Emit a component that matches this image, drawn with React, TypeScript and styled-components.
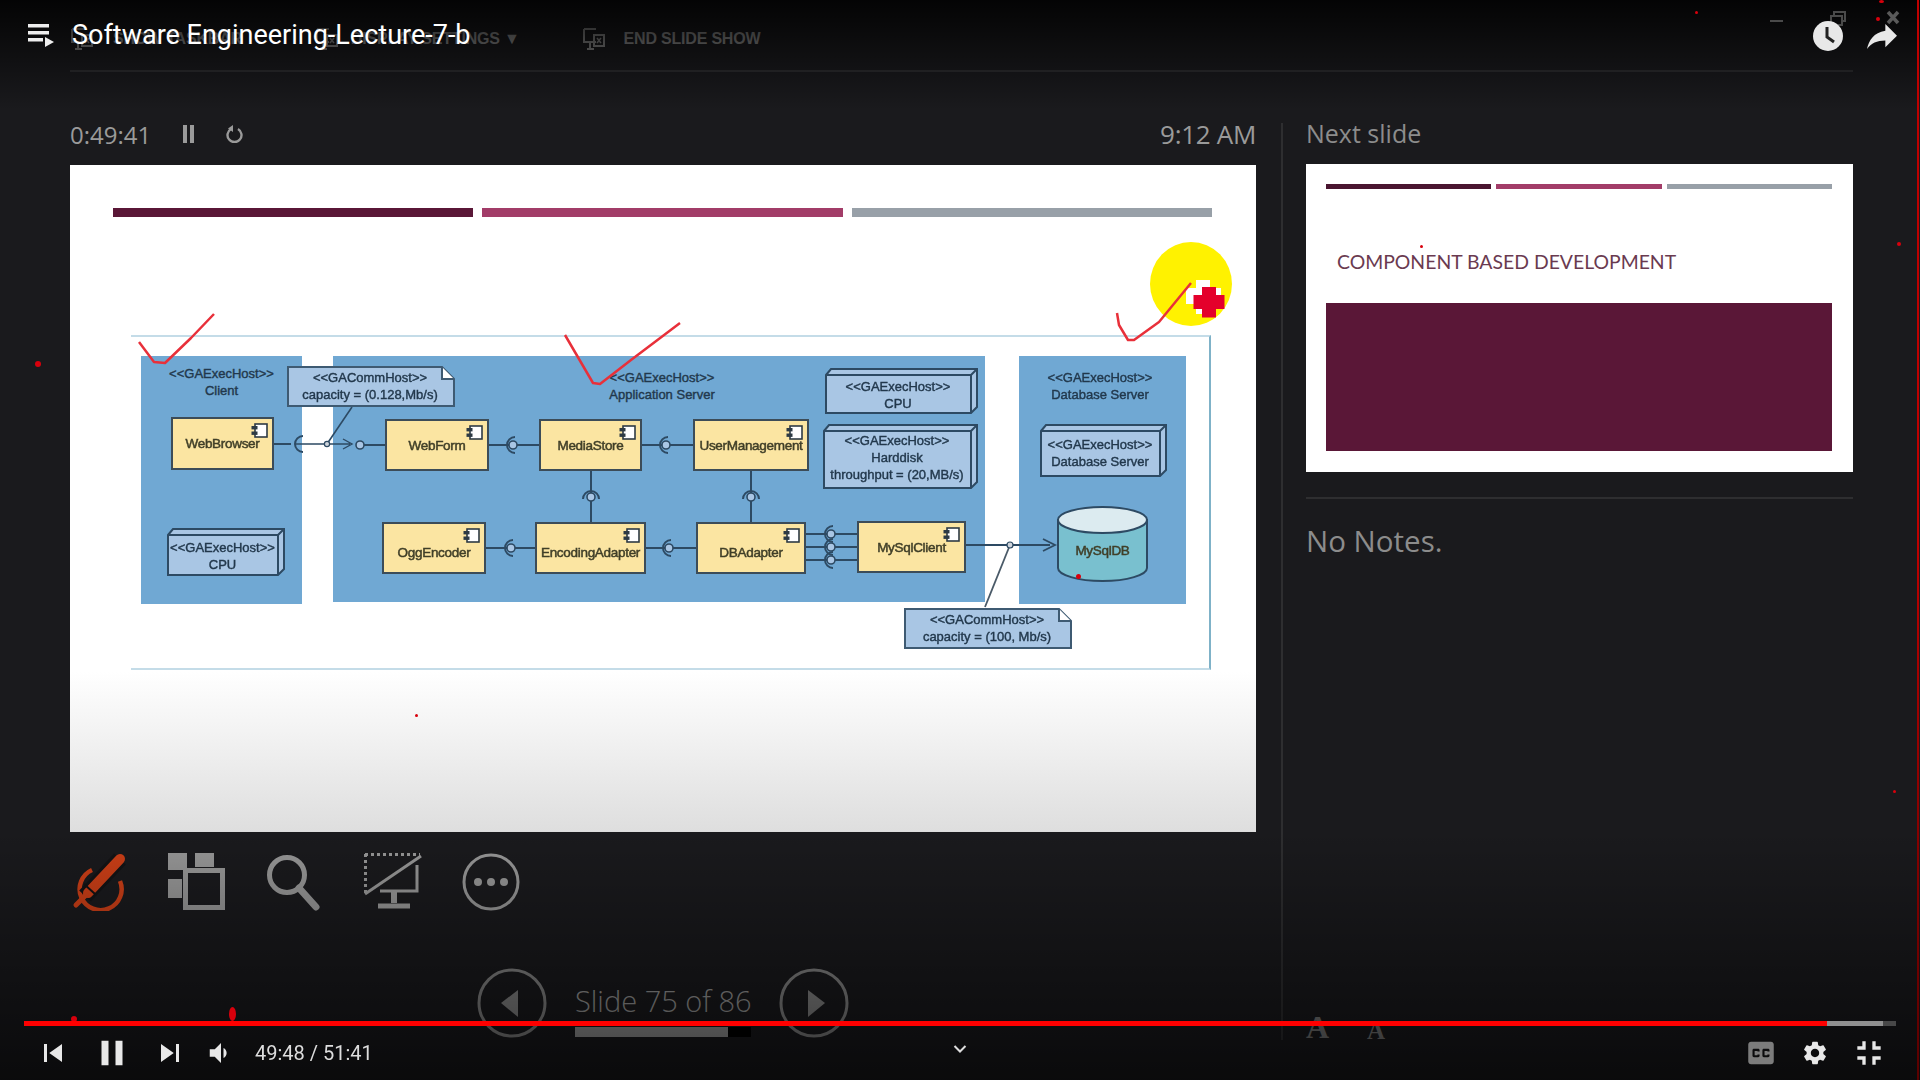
// REACT //
import React from 'react';

// COMPONENTS //
import styled, { createGlobalStyle } from 'styled-components';

// diagram nodes are given in page pixels, the frame starts here
const FRAME_X = 131;
const FRAME_Y = 335;

interface Place {
    $x: number;
    $y: number;
    $w: number;
    $h: number;
}

const CONTAINERS = [
    { x: 141, y: 356, w: 161, h: 248, lines: ['<<GAExecHost>>', 'Client'], top: 9, shift: 0 },
    { x: 333, y: 356, w: 652, h: 246, lines: ['<<GAExecHost>>', 'Application Server'], top: 13, shift: 6 },
    { x: 1019, y: 356, w: 167, h: 248, lines: ['<<GAExecHost>>', 'Database Server'], top: 13, shift: -5 },
];

const COMPONENTS = [
    { x: 171, y: 417, w: 103, h: 53, name: 'WebBrowser', drop: 0 },
    { x: 385, y: 419, w: 104, h: 52, name: 'WebForm', drop: 0 },
    { x: 539, y: 419, w: 103, h: 52, name: 'MediaStore', drop: 0 },
    { x: 693, y: 419, w: 116, h: 52, name: 'UserManagement', drop: 0 },
    { x: 382, y: 522, w: 104, h: 52, name: 'OggEncoder', drop: 9 },
    { x: 535, y: 522, w: 111, h: 52, name: 'EncodingAdapter', drop: 9 },
    { x: 696, y: 522, w: 110, h: 52, name: 'DBAdapter', drop: 9 },
    { x: 857, y: 521, w: 109, h: 52, name: 'MySqlClient', drop: 0 },
];

const HOSTS = [
    { x: 167, y: 528, w: 118, h: 48, pad: 11, lines: ['<<GAExecHost>>', 'CPU'] },
    { x: 825, y: 368, w: 153, h: 46, pad: 10, lines: ['<<GAExecHost>>', 'CPU'] },
    { x: 823, y: 424, w: 155, h: 65, pad: 8, lines: ['<<GAExecHost>>', 'Harddisk', 'throughput = (20,MB/s)'] },
    { x: 1040, y: 424, w: 127, h: 53, pad: 12, lines: ['<<GAExecHost>>', 'Database Server'] },
];

const NOTES = [
    { x: 287, y: 366, w: 168, h: 41, lines: ['<<GACommHost>>', 'capacity = (0.128,Mb/s)'] },
    { x: 904, y: 608, w: 168, h: 41, lines: ['<<GACommHost>>', 'capacity = (100, Mb/s)'] },
];

const SPECKS = [
    { x: 35, y: 361, w: 6, h: 6 },
    { x: 415, y: 714, w: 3, h: 3 },
    { x: 1076, y: 574, w: 5, h: 5 },
    { x: 1420, y: 245, w: 3, h: 3 },
    { x: 1695, y: 11, w: 3, h: 3 },
    { x: 1879, y: 0, w: 5, h: 3 },
    { x: 1876, y: 17, w: 4, h: 4 },
    { x: 1897, y: 242, w: 4, h: 4 },
    { x: 1893, y: 790, w: 3, h: 3 },
    { x: 71, y: 1016, w: 6, h: 6 },
    { x: 229, y: 1007, w: 7, h: 14 },
];

// sockets: ball on the wire and a half ring around it
const Socket: React.FC<{ x: number; y: number; turn?: number }> = ({ x, y, turn = 0 }) => (
    <g transform={`rotate(${turn} ${x} ${y})`}>
        <path d={`M${x + 2} ${y - 8}A8 8 0 0 0 ${x + 2} ${y + 8}`} fill="none" stroke="#2d4a63" strokeWidth="2" />
        <circle cx={x} cy={y} r="4" fill="#a9c6e4" stroke="#2d4a63" strokeWidth="1.6" />
    </g>
);

const Wires: React.FC = () => (
    <WireLayer viewBox={`${FRAME_X} ${FRAME_Y} 1080 335`}>
        <g stroke="#2d4a63" strokeWidth="2" fill="none">
            <path d="M274 444H291" />
            <path d="M303 436A8 8 0 0 0 303 452" />
            <path d="M296 444H350M343 439L352 444L343 449" strokeWidth="1.4" />
            <path d="M327 444L352 407" strokeWidth="1.6" />
            <circle cx="327" cy="444" r="2.6" fill="#cfd5dc" strokeWidth="1.2" />
            <path d="M364 445H385" />
            <circle cx="360" cy="445" r="4" fill="#a9c6e4" strokeWidth="1.6" />
            <path d="M489 445H539M642 445H693M486 548H535M646 548H696" />
            <path d="M591 471V522M751 471V522" />
            <path d="M806 534H857M806 547H857M806 560H857" />
            <path d="M966 545H1050M1043 539L1055 545L1043 551" strokeWidth="1.8" />
            <path d="M1010 545L985 607" strokeWidth="1.8" stroke="#4a5a68" />
            <circle cx="1010" cy="545" r="3" fill="#cfd5dc" strokeWidth="1.2" />
        </g>
        <Socket x={513} y={445} />
        <Socket x={666} y={445} />
        <Socket x={511} y={548} />
        <Socket x={669} y={548} />
        <Socket x={591} y={497} turn={90} />
        <Socket x={751} y={497} turn={90} />
        <Socket x={831} y={534} />
        <Socket x={831} y={547} />
        <Socket x={831} y={560} />
    </WireLayer>
);

const ComponentGlyph: React.FC = () => (
    <GlyphSvg viewBox="0 0 17 15">
        <rect x="4" y="1" width="12" height="13" fill="#fff" stroke="#2d3a44" strokeWidth="1.6" />
        <rect x="0.5" y="3" width="6" height="3.4" fill="#2d3a44" />
        <rect x="0.5" y="8.5" width="6" height="3.4" fill="#2d3a44" />
    </GlyphSvg>
);

const HostShape: React.FC<{ w: number; h: number }> = ({ w, h }) => (
    <ShapeSvg viewBox={`0 0 ${w} ${h}`}>
        <path
            d={`M1 7L6 1H${w - 1}V${h - 7}L${w - 7} ${h - 1}H1Z`}
            fill="#a9c6e4"
            stroke="#2d4a63"
            strokeWidth="2"
        />
        <path d={`M1 7H${w - 7}V${h - 1}M${w - 7} 7L${w - 1} 1`} fill="none" stroke="#2d4a63" strokeWidth="2" />
    </ShapeSvg>
);

const NoteShape: React.FC<{ w: number; h: number }> = ({ w, h }) => (
    <ShapeSvg viewBox={`0 0 ${w} ${h}`}>
        <path d={`M1 1H${w - 13}L${w - 1} 13V${h - 1}H1Z`} fill="#a9c6e4" stroke="#3e5a72" strokeWidth="2" />
        <path d={`M${w - 13} 1V13H${w - 1}`} fill="#fff" stroke="#3e5a72" strokeWidth="2" />
    </ShapeSvg>
);

const Diagram: React.FC = () => (
    <Frame>
        {CONTAINERS.map(c => (
            <Container key={c.x} $x={c.x} $y={c.y} $w={c.w} $h={c.h} $top={c.top} $shift={c.shift}>
                {c.lines.map(l => (
                    <Caption key={l}>{l}</Caption>
                ))}
            </Container>
        ))}
        <Wires />
        {COMPONENTS.map(c => (
            <ComponentBox key={c.name} $x={c.x} $y={c.y} $w={c.w} $h={c.h} $drop={c.drop}>
                <ComponentGlyph />
                <ComponentName>{c.name}</ComponentName>
            </ComponentBox>
        ))}
        {HOSTS.map(h => (
            <ShapedBox key={h.y + h.x} $x={h.x} $y={h.y} $w={h.w} $h={h.h} $pad={h.pad} $inset={7}>
                <HostShape w={h.w} h={h.h} />
                {h.lines.map(l => (
                    <Caption key={l}>{l}</Caption>
                ))}
            </ShapedBox>
        ))}
        {NOTES.map(n => (
            <ShapedBox key={n.x} $x={n.x} $y={n.y} $w={n.w} $h={n.h} $pad={3} $inset={2}>
                <NoteShape w={n.w} h={n.h} />
                {n.lines.map(l => (
                    <Caption key={l}>{l}</Caption>
                ))}
            </ShapedBox>
        ))}
        <ShapedBox $x={1057} $y={506} $w={91} $h={76} $pad={36} $inset={0}>
            <ShapeSvg viewBox="0 0 91 76">
                <path
                    d="M1 14V62C1 69 21 75 45.500 75S90 69 90 62V14Z"
                    fill="#79c0cf"
                    stroke="#2d4a63"
                    strokeWidth="2"
                />
                <ellipse cx="45.500" cy="14" rx="44.500" ry="13" fill="#dcebf0" stroke="#2d4a63" strokeWidth="2" />
            </ShapeSvg>
            <ComponentName>MySqlDB</ComponentName>
        </ShapedBox>
    </Frame>
);

const PenIcon: React.FC = () => (
    <ToolSvg viewBox="0 0 58 58">
        <path d="M22 17A21 21 0 1 0 50 28" fill="none" stroke="#cc3f17" strokeWidth="4.500" />
        <path d="M50 6L15 43" stroke="#131315" strokeWidth="16" />
        <path d="M50 6L18 40" stroke="#cc3f17" strokeWidth="10" strokeLinecap="round" />
        <path d="M16 42L6 52" stroke="#cc3f17" strokeWidth="5" strokeLinecap="round" />
        <path d="M14 31L25 41" stroke="#131315" strokeWidth="2" />
    </ToolSvg>
);

const GridIcon: React.FC = () => (
    <ToolSvg viewBox="0 0 58 58" fill="#979797">
        <rect x="0" y="0" width="19" height="17" />
        <rect x="27" y="0" width="19" height="14" />
        <rect x="0" y="26" width="14" height="19" />
        <rect x="17.500" y="17.500" width="37" height="37" fill="none" stroke="#979797" strokeWidth="5" />
    </ToolSvg>
);

const SearchIcon: React.FC = () => (
    <ToolSvg viewBox="0 0 58 58">
        <circle cx="21" cy="22" r="17.500" fill="none" stroke="#979797" strokeWidth="5" />
        <path d="M33 35L50 54" stroke="#979797" strokeWidth="7" strokeLinecap="round" />
    </ToolSvg>
);

const ScreenIcon: React.FC = () => (
    <ToolSvg viewBox="0 0 58 58">
        <path d="M1 1.500H56M1.500 1V40" stroke="#979797" strokeWidth="3" strokeDasharray="3 3" />
        <path d="M57 3L1 41" stroke="#979797" strokeWidth="3" />
        <path d="M53 12V38H16" fill="none" stroke="#979797" strokeWidth="3" />
        <path d="M30 38V50" stroke="#979797" strokeWidth="6" />
        <path d="M14 53H46" stroke="#979797" strokeWidth="5" />
    </ToolSvg>
);

const MoreIcon: React.FC = () => (
    <ToolSvg viewBox="0 0 58 58">
        <circle cx="29" cy="29" r="27" fill="none" stroke="#979797" strokeWidth="3" />
        <circle cx="16" cy="29" r="4" fill="#979797" />
        <circle cx="29" cy="29" r="4" fill="#979797" />
        <circle cx="42" cy="29" r="4" fill="#979797" />
    </ToolSvg>
);

const NavArrow: React.FC<{ next?: boolean }> = ({ next }) => (
    <NavSvg viewBox="0 0 70 70">
        <circle cx="35" cy="35" r="33" fill="none" stroke="#858585" strokeWidth="3" />
        <path d={next ? 'M29 22L46 35L29 49Z' : 'M41 22L24 35L41 49Z'} fill="#858585" />
    </NavSvg>
);

const GhostScreen: React.FC = () => (
    <GhostSvg viewBox="0 0 24 24">
        <path d="M2 2H14M2 2V15H14M5 22H12M8 15V22" fill="none" stroke="#8a8a8a" strokeWidth="2" />
        <rect x="12" y="8" width="10" height="11" fill="none" stroke="#8a8a8a" strokeWidth="2" />
        <path d="M15 11L19 16M19 11L15 16" stroke="#8a8a8a" strokeWidth="1.500" />
    </GhostSvg>
);

const App: React.FC = () => (
    <Page>
        <GlobalStyle />
        <SlideBar>
            <GhostItem $left={0}>
                <GhostScreen />
            </GhostItem>
            <GhostItem $left={19}>SHOW TASKBAR</GhostItem>
            <GhostItem $left={73}>
                <GhostScreen />
            </GhostItem>
            <GhostItem $left={12}>DISPLAY SETTINGS ▼</GhostItem>
            <GhostItem $left={62}>
                <GhostScreen />
            </GhostItem>
            <GhostItem $left={18}>END SLIDE SHOW</GhostItem>
        </SlideBar>

        <Main>
            <LeftPane>
                <ClockRow>
                    <Timer>0:49:41</Timer>
                    <TimerIcon viewBox="0 0 12 18">
                        <rect x="0" y="0" width="4" height="18" fill="#9a9a9a" />
                        <rect x="7" y="0" width="4" height="18" fill="#9a9a9a" />
                    </TimerIcon>
                    <TimerIcon viewBox="0 0 18 18">
                        <path d="M6 4A7 7 0 1 0 13 4" fill="none" stroke="#9a9a9a" strokeWidth="2.400" />
                        <path d="M8 0V7L3 3.500Z" fill="#9a9a9a" />
                    </TimerIcon>
                    <Clock>9:12 AM</Clock>
                </ClockRow>

                <Slide>
                    <Bars $gap={9} $h={9}>
                        <Bar $color="#5a1737" />
                        <Bar $color="#a23c68" />
                        <Bar $color="#98a0a8" />
                    </Bars>
                    <Diagram />
                    <Halo />
                    <CrossCursor viewBox="0 0 40 40">
                        <path d="M10 0H24V8H35V19H30V30H19V34H10V24H0V8H10Z" fill="#fff" />
                        <path d="M16 7H30V15H38.500V29H30V37.500H16V29H7.500V15H16Z" fill="#e4002b" />
                    </CrossCursor>
                </Slide>

                <ToolRow>
                    <PenIcon />
                    <GridIcon />
                    <SearchIcon />
                    <ScreenIcon />
                    <MoreIcon />
                </ToolRow>

                <NavRow>
                    <NavArrow />
                    <SlideCount>
                        <SlideLabel>Slide 75 of 86</SlideLabel>
                        <SlideTrack>
                            <SlideFill $pct={87} />
                        </SlideTrack>
                    </SlideCount>
                    <NavArrow next />
                </NavRow>
            </LeftPane>

            <RightPane>
                <NextLabel>Next slide</NextLabel>
                <Thumb>
                    <Bars $gap={5} $h={5}>
                        <Bar $color="#4a1530" />
                        <Bar $color="#a23c68" />
                        <Bar $color="#98a0a8" />
                    </Bars>
                    <ThumbTitle>COMPONENT BASED DEVELOPMENT</ThumbTitle>
                    <ThumbBlock />
                </Thumb>
                <Rule />
                <Notes>No Notes.</Notes>
                <FontButtons>
                    <FontButton $size={32}>A</FontButton>
                    <FontButton $size={25}>A</FontButton>
                </FontButtons>
            </RightPane>
        </Main>

        <TopShade />
        <BottomShade />

        <TitleBar>
            <svg width="26" height="24" viewBox="0 0 26 24">
                <rect x="0" y="1" width="21" height="3.500" fill="#eee" />
                <rect x="0" y="8" width="21" height="3.500" fill="#eee" />
                <rect x="0" y="15" width="15" height="3.500" fill="#eee" />
                <path d="M17 14L26 19L17 24Z" fill="#eee" />
            </svg>
            <Title>Software Engineering-Lecture-7-b</Title>
        </TitleBar>

        <WindowGhost>
            <svg width="130" height="20" viewBox="0 0 130 20">
                <path d="M0 11H13" stroke="#4a4a4a" strokeWidth="2" />
                <path d="M61 6H72V15H61ZM64 6V2H75V11H72" fill="none" stroke="#4a4a4a" strokeWidth="2" />
                <path d="M118 2L128 13M128 2L118 13" stroke="#5a5a5a" strokeWidth="3.500" />
            </svg>
        </WindowGhost>

        <TopActions>
            <svg width="30" height="30" viewBox="0 0 30 30">
                <circle cx="15" cy="15" r="15" fill="#e8e8e8" />
                <path d="M14 6V16L21 21" fill="none" stroke="#222" strokeWidth="3" />
            </svg>
            <svg width="30" height="25" viewBox="3 5 18 15" preserveAspectRatio="none">
                <path d="M14 9V5L21 12L14 19V14.900C9 14.900 5.500 16.500 3 20C4 15 7 10 14 9Z" fill="#e8e8e8" />
            </svg>
        </TopActions>

        <Scribbles viewBox="0 0 1920 1080">
            <path d="M139 342L154 362L165 363L191 338L214 314" />
            <path d="M565 335L593 383L600 384L631 360L680 323" />
            <path d="M1117 313L1119 325L1128 340L1134 340L1159 322L1191 283" />
        </Scribbles>
        {SPECKS.map(s => (
            <Speck key={s.x} $x={s.x} $y={s.y} $w={s.w} $h={s.h} />
        ))}
        <RedEdge />

        <Player>
            <Progress>
                <Played $pct={96.300} />
                <Buffered $pct={3} />
            </Progress>
            <Controls>
                <ControlButton $w={58}>
                    <svg width="36" height="36" viewBox="0 0 24 24" fill="#e8e8e8">
                        <path d="M6 6h2v12H6zm3.500 6l8.500 6V6z" />
                    </svg>
                </ControlButton>
                <ControlButton $w={60}>
                    <svg width="42" height="42" viewBox="0 0 24 24" fill="#e8e8e8">
                        <path d="M6 19h4V5H6v14zm8-14v14h4V5h-4z" />
                    </svg>
                </ControlButton>
                <ControlButton $w={56}>
                    <svg width="36" height="36" viewBox="0 0 24 24" fill="#e8e8e8">
                        <path d="M6 18l8.500-6L6 6v12zM16 6v12h2V6h-2z" />
                    </svg>
                </ControlButton>
                <ControlButton $w={46}>
                    <svg width="30" height="30" viewBox="0 0 24 24" fill="#e8e8e8">
                        <path d="M3 9v6h4l5 5V4L7 9H3zm13.500 3c0-1.770-1.020-3.290-2.500-4.030v8.050c1.480-.730 2.500-2.250 2.500-4.020z" />
                    </svg>
                </ControlButton>
                <TimeText>49:48 / 51:41</TimeText>
                <Chevron viewBox="0 0 14 10">
                    <path d="M1.500 2L7 7.500L12.500 2" fill="none" stroke="#ddd" strokeWidth="2" />
                </Chevron>
                <RightControls>
                    <ControlButton $w={54}>
                        <svg width="34" height="34" viewBox="0 0 24 24" fill="#7c7c7c">
                            <path d="M19 4H5c-1.110 0-2 .900-2 2v12c0 1.100.890 2 2 2h14c1.100 0 2-.900 2-2V6c0-1.100-.900-2-2-2zm-8 7H9.500v-.500h-2v3h2V13H11v1c0 .550-.450 1-1 1H7c-.550 0-1-.450-1-1v-4c0-.550.450-1 1-1h3c.550 0 1 .450 1 1v1zm7 0h-1.500v-.500h-2v3h2V13H18v1c0 .550-.450 1-1 1h-3c-.550 0-1-.450-1-1v-4c0-.550.450-1 1-1h3c.550 0 1 .450 1 1v1z" />
                        </svg>
                    </ControlButton>
                    <ControlButton $w={54}>
                        <svg width="28" height="28" viewBox="0 0 24 24" fill="#e8e8e8">
                            <path d="M19.140 12.940c.040-.300.060-.610.060-.940 0-.320-.020-.640-.070-.940l2.030-1.580c.180-.140.230-.410.120-.610l-1.920-3.320c-.120-.220-.370-.290-.590-.220l-2.390.960c-.500-.380-1.030-.700-1.620-.940l-.360-2.540c-.040-.240-.240-.410-.480-.410h-3.840c-.240 0-.430.170-.470.410l-.360 2.540c-.590.240-1.130.570-1.620.940l-2.390-.960c-.220-.080-.470 0-.590.220L2.740 8.870c-.120.210-.080.470.120.610l2.030 1.580c-.050.300-.090.630-.090.940s.020.640.070.940l-2.030 1.580c-.180.140-.230.410-.120.610l1.920 3.320c.120.220.370.290.590.220l2.390-.960c.500.380 1.030.700 1.620.940l.360 2.540c.050.240.240.410.480.410h3.840c.240 0 .440-.170.470-.410l.360-2.540c.590-.240 1.130-.560 1.620-.940l2.390.960c.220.080.470 0 .590-.220l1.920-3.320c.120-.220.070-.470-.120-.610l-2.010-1.580zM12 15.600c-1.980 0-3.600-1.620-3.600-3.600s1.620-3.600 3.600-3.600 3.600 1.620 3.600 3.600-1.620 3.600-3.600 3.600z" />
                        </svg>
                    </ControlButton>
                    <ControlButton $w={54}>
                        <svg width="40" height="40" viewBox="0 0 24 24" fill="#e8e8e8">
                            <path d="M5 16h3v3h2v-5H5v2zm3-8H5v2h5V5H8v3zm6 11h2v-3h3v-2h-5v5zm2-11V5h-2v5h5V8h-3z" />
                        </svg>
                    </ControlButton>
                </RightControls>
            </Controls>
        </Player>
    </Page>
);

// STYLES //
const GlobalStyle = createGlobalStyle`
    html, body {
        margin: 0;
        padding: 0;
        background: #1a1a1d;
    }
`;

const Page = styled.div`
    position: relative;
    width: 1920px;
    height: 1080px;
    overflow: hidden;
    background: #1a1a1d;
    font-family: 'Open Sans', 'Liberation Sans', sans-serif;
`;

const SlideBar = styled.div`
    display: flex;
    align-items: center;
    box-sizing: border-box;
    width: 1783px;
    height: 72px;
    margin-left: 70px;
    padding-top: 8px;
    border-bottom: 2px solid #2e2e30;
`;

const GhostItem = styled.div<{ $left: number }>`
    display: flex;
    align-items: center;
    margin-left: ${p => p.$left}px;
    color: #8e8e8e;
    font-family: 'Liberation Sans', sans-serif;
    font-size: 16px;
    font-weight: 700;
    letter-spacing: -0.2px;
    white-space: nowrap;
`;

const GhostSvg = styled.svg`
    width: 24px;
    height: 24px;
`;

const Main = styled.div`
    display: flex;
    padding-left: 70px;
`;

const LeftPane = styled.div`
    width: 1186px;
`;

const ClockRow = styled.div`
    display: flex;
    align-items: center;
    box-sizing: border-box;
    height: 93px;
    padding-top: 31px;
    color: #9a9a9a;
`;

const Timer = styled.div`
    width: 110px;
    font-size: 24px;
    font-weight: 400;
`;

const TimerIcon = styled.svg`
    width: 18px;
    height: 18px;
    margin-right: 27px;
`;

const Clock = styled.div`
    margin-left: auto;
    font-size: 26px;
    font-weight: 400;
    letter-spacing: -0.3px;
`;

const Slide = styled.div`
    position: relative;
    box-sizing: border-box;
    width: 1186px;
    height: 667px;
    padding: 43px 44px 0 43px;
    background: linear-gradient(#fff 0%, #fff 76%, #dedede 100%);
`;

const Bars = styled.div<{ $gap: number; $h: number }>`
    display: grid;
    grid-template-columns: repeat(3, 1fr);
    gap: ${p => p.$gap}px;
    height: ${p => p.$h}px;
`;

const Bar = styled.div<{ $color: string }>`
    background: ${p => p.$color};
`;

const Frame = styled.div`
    position: relative;
    box-sizing: border-box;
    width: 1080px;
    height: 335px;
    margin: 118px 0 0 18px;
    border-top: 2px solid #c4dce8;
    border-bottom: 2px solid #c4dce8;
    border-right: 2px solid #7fb2c8;
    filter: blur(0.6px);
`;

const placed = (p: Place) => `
    position: absolute;
    left: ${p.$x - FRAME_X}px;
    top: ${p.$y - FRAME_Y - 2}px;
    width: ${p.$w}px;
    height: ${p.$h}px;
`;

const Container = styled.div<Place & { $top: number; $shift: number }>`
    ${placed}
    box-sizing: border-box;
    padding-top: ${p => p.$top}px;
    padding-left: ${p => Math.max(p.$shift, 0)}px;
    padding-right: ${p => Math.max(-p.$shift, 0)}px;
    background: #70a8d3;
`;

const Caption = styled.div`
    position: relative;
    color: #22384c;
    font-family: 'Liberation Sans', sans-serif;
    font-size: 13px;
    line-height: 17px;
    text-align: center;
    white-space: nowrap;
    -webkit-text-stroke: 0.4px #22384c;
`;

const WireLayer = styled.svg`
    position: absolute;
    left: 0;
    top: -2px;
    width: 1080px;
    height: 335px;
`;

const ComponentBox = styled.div<Place & { $drop: number }>`
    ${placed}
    display: flex;
    align-items: center;
    justify-content: center;
    box-sizing: border-box;
    padding-top: ${p => p.$drop}px;
    background: #fbe5a2;
    border: 2px solid #3c4c58;
`;

const ComponentName = styled.div`
    position: relative;
    color: #403f28;
    font-family: 'Liberation Sans', sans-serif;
    font-size: 13.500px;
    line-height: 17px;
    letter-spacing: -0.3px;
    text-align: center;
    white-space: nowrap;
    -webkit-text-stroke: 0.5px #403f28;
`;

const GlyphSvg = styled.svg`
    position: absolute;
    top: 4px;
    right: 4px;
    width: 17px;
    height: 15px;
`;

const ShapedBox = styled.div<Place & { $pad: number; $inset: number }>`
    ${placed}
    box-sizing: border-box;
    padding-top: ${p => p.$pad}px;
    padding-right: ${p => p.$inset}px;
`;

const ShapeSvg = styled.svg`
    position: absolute;
    inset: 0;
    width: 100%;
    height: 100%;
`;

const Halo = styled.div`
    position: absolute;
    left: 1080px;
    top: 77px;
    width: 82px;
    height: 84px;
    border-radius: 50%;
    background: #fff200;
`;

const CrossCursor = styled.svg`
    position: absolute;
    left: 1116px;
    top: 115px;
    width: 40px;
    height: 40px;
`;

const ToolRow = styled.div`
    display: flex;
    gap: 40px;
    margin-top: 21px;
`;

const ToolSvg = styled.svg`
    width: 58px;
    height: 58px;
`;

const NavRow = styled.div`
    display: flex;
    justify-content: center;
    gap: 28px;
    margin-top: 57px;
`;

const NavSvg = styled.svg`
    width: 70px;
    height: 70px;
`;

const SlideCount = styled.div`
    display: flex;
    flex-direction: column;
    align-items: flex-start;
    width: 176px;
`;

const SlideLabel = styled.div`
    height: 58px;
    color: #9a9a9a;
    font-size: 29px;
    font-weight: 300;
    line-height: 66px;
    white-space: nowrap;
`;

const SlideTrack = styled.div`
    width: 100%;
    height: 10px;
    margin-top: 1px;
    background: #000;
`;

const SlideFill = styled.div<{ $pct: number }>`
    width: ${p => p.$pct}%;
    height: 100%;
    background: #9a9a9a;
`;

const RightPane = styled.div`
    display: flex;
    flex-direction: column;
    box-sizing: border-box;
    width: 572px;
    height: 917px;
    margin: 51px 0 0 25px;
    padding-left: 23px;
    border-left: 2px solid #2e2e30;
`;

const NextLabel = styled.div`
    height: 41px;
    color: #8c8c8c;
    font-size: 25px;
    line-height: 20px;
`;

const Thumb = styled.div`
    box-sizing: border-box;
    width: 547px;
    height: 308px;
    padding: 20px 21px 0 20px;
    background: #fff;
`;

const ThumbTitle = styled.div`
    margin: 61px 0 0 11px;
    color: #6a3a50;
    font-family: Lato, 'Open Sans', sans-serif;
    font-size: 19.400px;
    line-height: 24px;
    white-space: nowrap;
`;

const ThumbBlock = styled.div`
    height: 148px;
    margin-top: 29px;
    background: #5a1737;
`;

const Rule = styled.div`
    height: 2px;
    margin-top: 25px;
    background: #2e2e30;
`;

const Notes = styled.div`
    margin-top: 20px;
    color: #8c8c8c;
    font-size: 29.500px;
    line-height: 44px;
`;

const FontButtons = styled.div`
    display: flex;
    gap: 38px;
    align-items: flex-end;
    margin-top: auto;
    margin-bottom: -3px;
`;

const FontButton = styled.div<{ $size: number }>`
    color: #7a7a7a;
    font-family: 'Liberation Serif', serif;
    font-size: ${p => p.$size}px;
    font-weight: 700;
    line-height: 1;
`;

const TopShade = styled.div`
    position: absolute;
    left: 0;
    right: 0;
    top: 0;
    height: 110px;
    background: linear-gradient(rgba(0, 0, 0, 0.85), rgba(0, 0, 0, 0));
`;

const BottomShade = styled.div`
    position: absolute;
    left: 0;
    right: 0;
    bottom: 0;
    height: 250px;
    background: linear-gradient(rgba(0, 0, 0, 0), rgba(0, 0, 0, 0.6));
`;

const TitleBar = styled.div`
    position: absolute;
    left: 28px;
    top: 17px;
    display: flex;
    align-items: center;
    gap: 18px;
`;

const Title = styled.div`
    color: #fff;
    font-family: Roboto, 'Liberation Sans', sans-serif;
    font-size: 27px;
    line-height: 36px;
    white-space: nowrap;
`;

const WindowGhost = styled.div`
    position: absolute;
    left: 1770px;
    top: 10px;
`;

const TopActions = styled.div`
    position: absolute;
    left: 1813px;
    top: 21px;
    display: flex;
    align-items: center;
    gap: 24px;
`;

const Scribbles = styled.svg`
    position: absolute;
    inset: 0;
    width: 1920px;
    height: 1080px;
    fill: none;
    stroke: #e8303a;
    stroke-width: 2.500;
    stroke-linejoin: round;
    pointer-events: none;
`;

const Speck = styled.div<Place>`
    position: absolute;
    left: ${p => p.$x}px;
    top: ${p => p.$y}px;
    width: ${p => p.$w}px;
    height: ${p => p.$h}px;
    border-radius: 50%;
    background: #d8000c;
`;

const RedEdge = styled.div`
    position: absolute;
    right: 1px;
    top: 0;
    bottom: 0;
    width: 2px;
    background: linear-gradient(#c00000, #c00000 50%, #5a0000);
`;

const Player = styled.div`
    position: absolute;
    left: 0;
    right: 0;
    bottom: 0;
    height: 59px;
`;

const Progress = styled.div`
    display: flex;
    height: 5px;
    margin: 0 24px;
    background: #484848;
`;

const Played = styled.div<{ $pct: number }>`
    width: ${p => p.$pct}%;
    background: #ff0000;
`;

const Buffered = styled.div<{ $pct: number }>`
    width: ${p => p.$pct}%;
    background: #909090;
`;

const Controls = styled.div`
    position: relative;
    display: flex;
    align-items: center;
    height: 54px;
    padding: 0 24px;
`;

const ControlButton = styled.div<{ $w: number }>`
    display: flex;
    align-items: center;
    justify-content: center;
    width: ${p => p.$w}px;
`;

const TimeText = styled.div`
    margin-left: 11px;
    color: #ddd;
    font-family: Roboto, 'Liberation Sans', sans-serif;
    font-size: 20px;
    white-space: nowrap;
`;

const Chevron = styled.svg`
    position: absolute;
    left: 953px;
    top: 18px;
    width: 14px;
    height: 10px;
`;

const RightControls = styled.div`
    display: flex;
    margin-left: auto;
`;

export default App;
